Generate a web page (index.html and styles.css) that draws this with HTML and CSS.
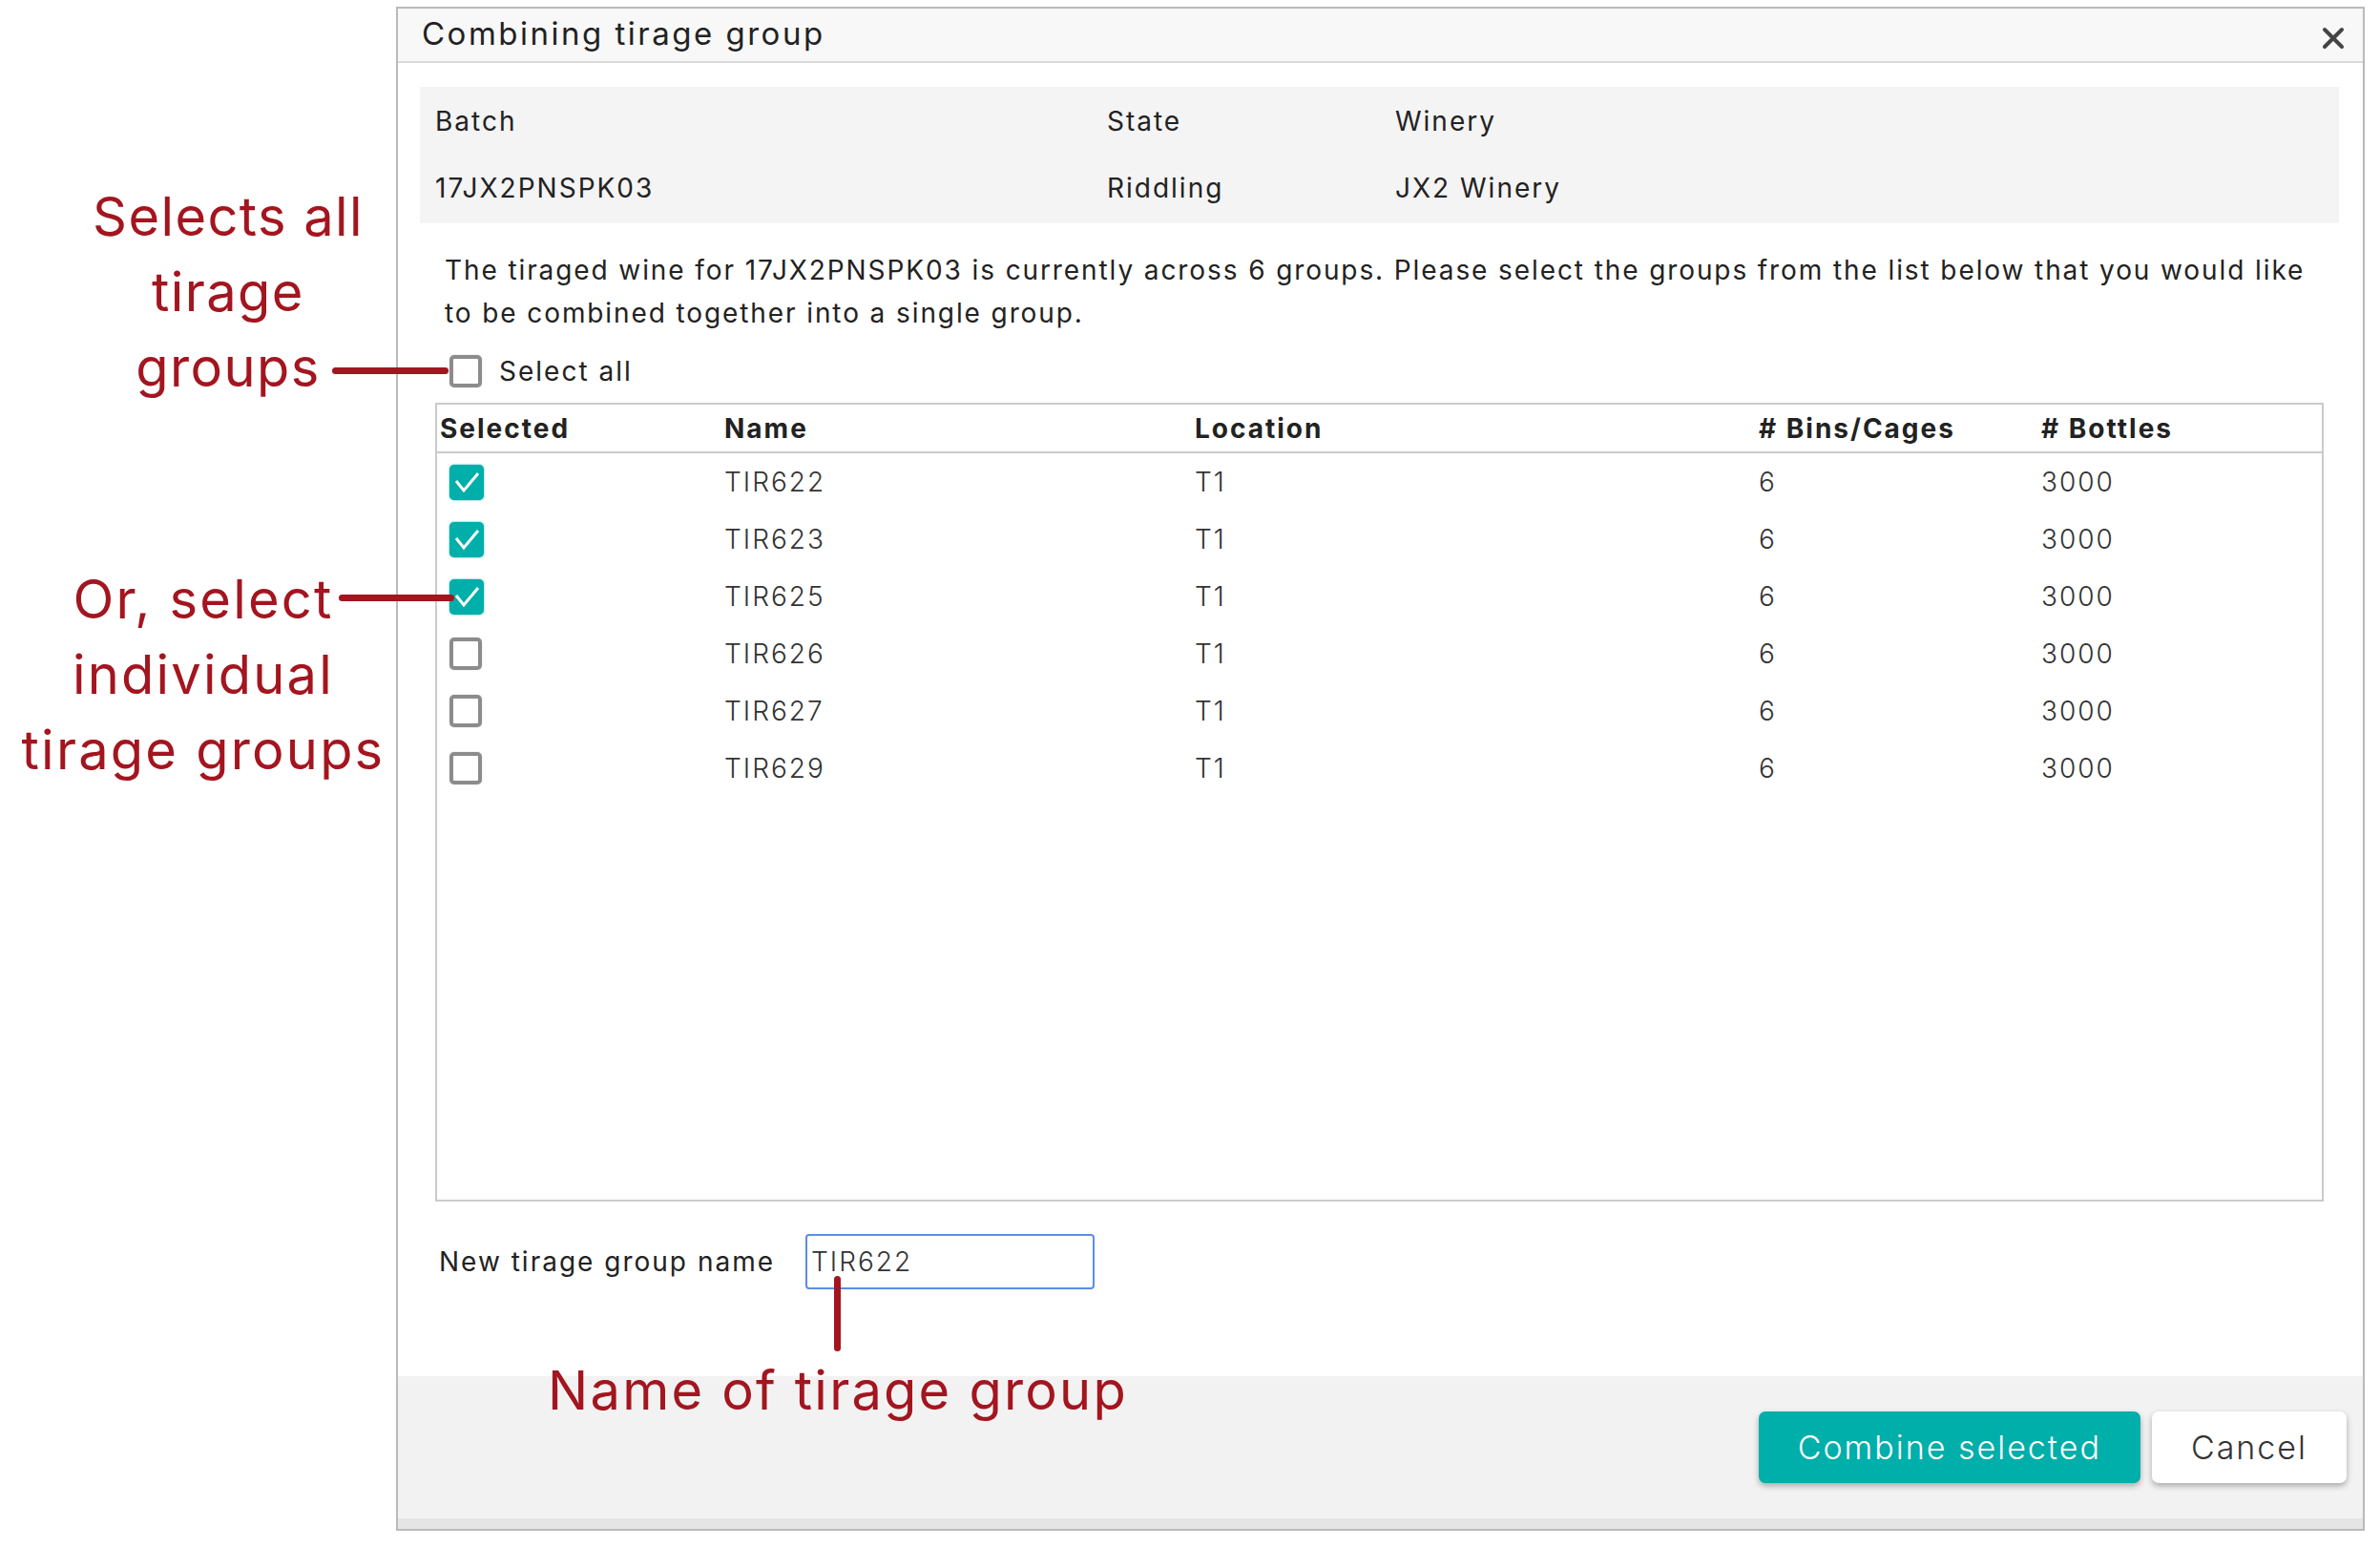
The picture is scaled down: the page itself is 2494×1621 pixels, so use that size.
FILE: index.html
```html
<!DOCTYPE html>
<html lang="en">
<head>
    <meta charset="UTF-8">
    <title>Combining tirage group</title>
<link rel="stylesheet" href="styles.css">
</head>
<body>
    <div class="page">
        <div class="dialog">
            <div class="dialog-header">
                <h1>Combining tirage group</h1>
                <button class="close" aria-label="Close">
                    <svg width="24" height="24" viewBox="0 0 24 24"><path d="M3 3 L21 21 M21 3 L3 21" stroke="#444" stroke-width="4" stroke-linecap="round"/></svg>
                </button>
            </div>

            <div class="dialog-body">
                <div class="batch-info">
                    <span>Batch</span>
                    <span>State</span>
                    <span>Winery</span>
                    <span>17JX2PNSPK03</span>
                    <span>Riddling</span>
                    <span>JX2 Winery</span>
                </div>

                <p class="intro">The tiraged wine for 17JX2PNSPK03 is currently across 6 groups. Please select the groups from the list below that you would like to be combined together into a single group.</p>

                <label class="select-all"><span class="box"></span>Select all</label>

                <div class="groups">
                    <div class="row head">
                        <span>Selected</span>
                        <span>Name</span>
                        <span>Location</span>
                        <span># Bins/Cages</span>
                        <span># Bottles</span>
                    </div>
                    <div class="row">
                        <span class="pick"><span class="box checked"><svg viewBox="0 0 36 36"><path d="M7 17 L15 27 L30 9" fill="none" stroke="#fff" stroke-width="3"/></svg></span></span>
                        <span>TIR622</span><span>T1</span><span>6</span><span>3000</span>
                    </div>
                    <div class="row">
                        <span class="pick"><span class="box checked"><svg viewBox="0 0 36 36"><path d="M7 17 L15 27 L30 9" fill="none" stroke="#fff" stroke-width="3"/></svg></span></span>
                        <span>TIR623</span><span>T1</span><span>6</span><span>3000</span>
                    </div>
                    <div class="row">
                        <span class="pick"><span class="box checked"><svg viewBox="0 0 36 36"><path d="M7 17 L15 27 L30 9" fill="none" stroke="#fff" stroke-width="3"/></svg></span></span>
                        <span>TIR625</span><span>T1</span><span>6</span><span>3000</span>
                    </div>
                    <div class="row">
                        <span class="pick"><span class="box"></span></span>
                        <span>TIR626</span><span>T1</span><span>6</span><span>3000</span>
                    </div>
                    <div class="row">
                        <span class="pick"><span class="box"></span></span>
                        <span>TIR627</span><span>T1</span><span>6</span><span>3000</span>
                    </div>
                    <div class="row">
                        <span class="pick"><span class="box"></span></span>
                        <span>TIR629</span><span>T1</span><span>6</span><span>3000</span>
                    </div>
                </div>

                <div class="name-row">
                    <label for="groupName">New tirage group name</label>
                    <input id="groupName" type="text" value="TIR622">
                </div>
            </div>

            <div class="dialog-footer">
                <button class="btn primary">Combine selected</button>
                <button class="btn">Cancel</button>
            </div>
        </div>

        <!-- callouts -->
        <div class="note note-all">Selects all<br>tirage<br>groups</div>
        <div class="leader leader-all"></div>
        <div class="note note-each">Or, select<br>individual<br>tirage groups</div>
        <div class="leader leader-each"></div>
        <div class="leader leader-name"></div>
        <div class="note note-name">Name of tirage group</div>
    </div>
</body>
</html>
```

FILE: styles.css
```css
* {
    box-sizing: border-box;
}

body {
    margin: 0;
    font-family: 'Inter', 'Noto Sans', sans-serif;
    color: #222;
    background: #fff;
}

.page {
    position: relative;
    width: 2494px;
    height: 1621px;
    padding: 7px 0 0 415px;
}

.dialog {
    width: 2063px;
    height: 1597px;
    border: 2px solid #bababa;
    display: flex;
    flex-direction: column;
    background: #fff;
}

.dialog-header {
    height: 57px;
    background: #f8f8f8;
    border-bottom: 2px solid #dadada;
    display: flex;
    align-items: center;
    justify-content: space-between;
    padding: 0 19px 0 25px;
}

.dialog-header h1 {
    margin: 0 0 4px;
    font-size: 33px;
    font-weight: 400;
    letter-spacing: 2.5px;
    color: #222;
}

.close {
    border: none;
    background: none;
    padding: 0;
    width: 24px;
    height: 24px;
    margin-top: 6px;
}

.close svg {
    display: block;
}

.dialog-body {
    flex: 1;
    padding: 25px 25px 0 23px;
    font-size: 28px;
    letter-spacing: 2px;
}

.batch-info {
    display: grid;
    grid-template-columns: 704px 302px 1fr;
    grid-auto-rows: 70px;
    align-items: center;
    background: #f4f4f4;
    padding: 1px 16px 2px;
}

.intro {
    margin: 27px 0 0 26px;
    line-height: 45px;
    letter-spacing: 1.9px;
}

.select-all {
    display: flex;
    align-items: center;
    gap: 18px;
    height: 34px;
    margin: 21px 0 0 31px;
}

.box {
    display: inline-block;
    width: 34px;
    height: 34px;
    border: 4px solid #8c8c8c;
    border-radius: 5px;
    box-shadow: 0 0 1px #8c8c8c;
}

.box.checked {
    width: 36px;
    height: 37px;
    border: none;
    background: #00aeaa;
    box-shadow: 0 0 2px #00aeaa;
}

.box svg {
    display: block;
    width: 36px;
    height: 36px;
}

.groups {
    height: 837px;
    margin: 16px 16px 0;
    border: 2px solid #cbcbcb;
}

.row {
    display: grid;
    grid-template-columns: 298px 493px 591px 296px 1fr;
    align-items: center;
    height: 60px;
    font-weight: 300;
    color: #333;
}

.row > span {
    padding-left: 3px;
}

.row.head {
    height: 51px;
    border-bottom: 2px solid #cbcbcb;
    font-weight: 700;
    color: #222;
}

.row .pick {
    display: flex;
    padding-left: 13px;
}

.name-row {
    display: flex;
    align-items: center;
    gap: 32px;
    margin: 34px 0 0 20px;
}

.name-row input {
    width: 303px;
    height: 58px;
    border: 2px solid #5a8ee2;
    border-radius: 4px;
    padding: 0 4px;
    font: inherit;
    font-weight: 300;
    letter-spacing: inherit;
    color: #333;
    outline: none;
}

.dialog-footer {
    height: 160px;
    background: #f2f2f2;
    border-bottom: 11px solid #e5e5e5;
    display: flex;
    justify-content: flex-end;
    align-items: flex-start;
    gap: 12px;
    padding: 37px 17px 0 0;
}

.btn {
    height: 75px;
    padding: 0 41px;
    border: none;
    border-radius: 7px;
    background: #fff;
    color: #333;
    font-family: inherit;
    font-size: 34px;
    font-weight: 300;
    letter-spacing: 2px;
    box-shadow: 0 3px 6px rgba(0, 0, 0, 0.3);
}

.btn.primary {
    background: #00aeaa;
    color: #fff;
}

.note {
    position: absolute;
    color: #a3151f;
    font-size: 56px;
    line-height: 79px;
    letter-spacing: 2.2px;
    text-align: center;
}

.note-all {
    left: 59px;
    top: 188px;
    width: 360px;
    letter-spacing: 1.4px;
}

.note-each {
    left: 13px;
    top: 589px;
    width: 400px;
}

.note-name {
    left: 478px;
    top: 1418px;
    width: 800px;
}

.leader {
    position: absolute;
    background: #a3151f;
    border-radius: 4px;
}

.leader-all {
    left: 348px;
    top: 385px;
    width: 122px;
    height: 7px;
}

.leader-each {
    left: 355px;
    top: 623px;
    width: 121px;
    height: 7px;
}

.leader-name {
    left: 874px;
    top: 1337px;
    width: 7px;
    height: 79px;
}
```
